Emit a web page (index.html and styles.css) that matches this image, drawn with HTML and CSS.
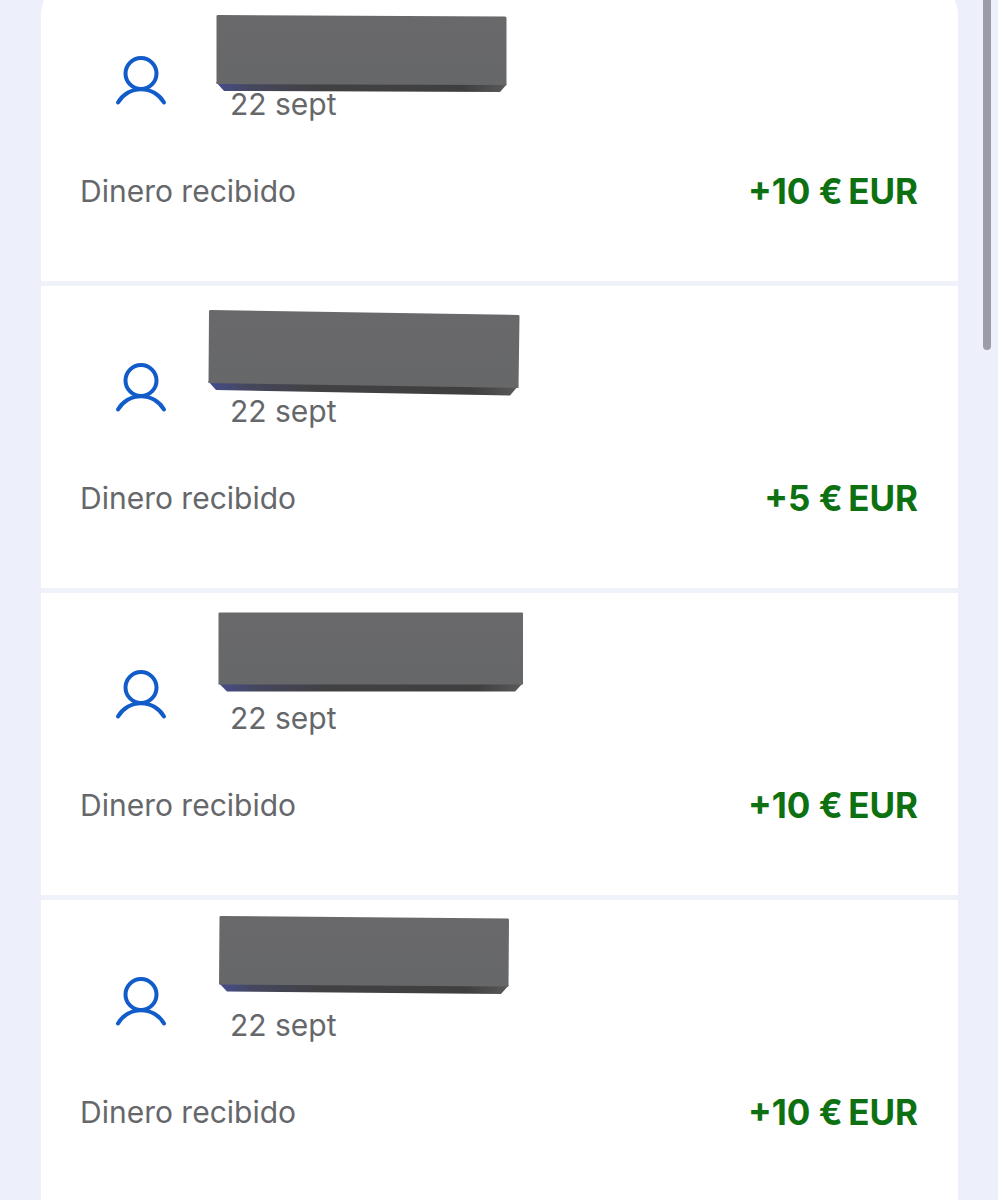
FILE: index.html
```html
<!DOCTYPE html>
<html lang="es">
<head>
<meta charset="utf-8">
<meta name="viewport" content="width=device-width, initial-scale=1">
<title>Actividad</title>
<link rel="stylesheet" href="styles.css">
</head>
<body>
<svg width="0" height="0" class="defs" aria-hidden="true">
  <defs>
    <linearGradient id="face" x1="0" y1="0" x2="0" y2="1"><stop offset="0" stop-color="#69696b"/><stop offset="1" stop-color="#666769"/></linearGradient>
    <linearGradient id="lip" x1="0" y1="0" x2="1" y2="0"><stop offset="0" stop-color="#454d8c"/><stop offset="0.12" stop-color="#45475e"/><stop offset="0.35" stop-color="#414143"/><stop offset="0.85" stop-color="#403f40"/><stop offset="1" stop-color="#59595a"/></linearGradient>
    <symbol id="person" viewBox="0 0 52 50">
      <circle cx="26" cy="17.500" r="15.500"/>
      <path d="M3 46.500A26.500 26.500 0 0 1 49 46.500"/>
    </symbol>
  </defs>
</svg>
<main class="activity">
  <ul class="list">
    <li class="row">
      <div class="head">
        <svg class="person" aria-hidden="true"><use href="#person"/></svg>
        <div class="info">
          <svg class="cover" viewBox="0 0 330 107" role="img" aria-label="Nombre oculto">
            <path fill="url(#lip)" d="M16 103 24 112 300 113 307 105Z"/>
            <path fill="url(#face)" d="M16.500 37Q16.500 36 18 36L305 37.500Q306.500 37.500 306.500 39V106L16.500 105Z"/>
          </svg>
          <time class="date">22 sept</time>
        </div>
      </div>
      <div class="detail"><span class="kind">Dinero recibido</span><strong class="amount">+10 €&thinsp;EUR</strong></div>
    </li>
    <li class="row">
      <div class="head">
        <svg class="person" aria-hidden="true"><use href="#person"/></svg>
        <div class="info">
          <svg class="cover" viewBox="0 0 330 107" role="img" aria-label="Nombre oculto">
            <path fill="url(#lip)" d="M8 95 16 104 310 109.500 318 100Z"/>
            <path fill="url(#face)" d="M9 25Q9 24 11 24L318 29Q319.500 29 319.500 30L318.500 102 8.500 97Z"/>
          </svg>
          <time class="date">22 sept</time>
        </div>
      </div>
      <div class="detail"><span class="kind">Dinero recibido</span><strong class="amount">+5 €&thinsp;EUR</strong></div>
    </li>
    <li class="row">
      <div class="head">
        <svg class="person" aria-hidden="true"><use href="#person"/></svg>
        <div class="info">
          <svg class="cover" viewBox="0 0 330 107" role="img" aria-label="Nombre oculto">
            <path fill="url(#lip)" d="M18.500 90 27 98.500H315L323 90Z"/>
            <path fill="url(#face)" d="M18.500 20.500Q18.500 19.500 20 19.500H322Q323 19.500 323 20.500V91.500H18.500Z"/>
          </svg>
          <time class="date">22 sept</time>
        </div>
      </div>
      <div class="detail"><span class="kind">Dinero recibido</span><strong class="amount">+10 €&thinsp;EUR</strong></div>
    </li>
    <li class="row">
      <div class="head">
        <svg class="person" aria-hidden="true"><use href="#person"/></svg>
        <div class="info">
          <svg class="cover" viewBox="0 0 330 107" role="img" aria-label="Nombre oculto">
            <path fill="url(#lip)" d="M19 83 27 91.500 301 94 309 85Z"/>
            <path fill="url(#face)" d="M19.500 17Q19.500 16 21 16L308 18.500Q309 18.500 309 20L308.500 86.500 19 84.500Z"/>
          </svg>
          <time class="date">22 sept</time>
        </div>
      </div>
      <div class="detail"><span class="kind">Dinero recibido</span><strong class="amount">+10 €&thinsp;EUR</strong></div>
    </li>
  </ul>
</main>
<div class="scroll-thumb" aria-hidden="true"></div>
</body>
</html>
```
FILE: styles.css
```css
html {
  height: 100%;
  overflow: hidden;
}

body {
  margin: 0;
  height: 100%;
  overflow: hidden;
  background: #edf0fa;
  font-family: Inter, "Liberation Sans", sans-serif;
  color: #66676a;
}

.defs {
  position: absolute;
}

/* The list is scrolled slightly past its top edge. */
.activity {
  display: flow-root;
}

.list {
  list-style: none;
  margin: -21px 40px 0 41px;
  padding: 0;
  background: #fff;
  border-radius: 36px 36px 0 0;
}

.row {
  padding: 0 40px 69px 39px;
}

.row + .row {
  border-top: 5px solid #f0f2f9;
}

.head {
  display: flex;
  margin-bottom: 48px;
}

.person {
  width: 52px;
  height: 50px;
  margin: 77px 0 0 35px;
  fill: none;
  stroke: #115cc9;
  stroke-width: 4;
  stroke-linecap: round;
}

.info {
  display: flex;
  flex-direction: column;
  margin-left: 33px;
}

.cover {
  width: 330px;
  height: 107px;
  overflow: visible;
}

.date {
  position: relative;
  padding-left: 30px;
  font-size: 30px;
  line-height: 36px;
}

.detail {
  display: flex;
  align-items: center;
  justify-content: space-between;
}

.kind {
  font-size: 30px;
  line-height: 42px;
}

.amount {
  font-size: 35px;
  line-height: 42px;
  font-weight: 700;
  color: #0d7111;
}

.scroll-thumb {
  position: absolute;
  top: -20px;
  right: 7px;
  width: 8px;
  height: 370px;
  border-radius: 4px;
  background: #9b9ca7;
}
```
